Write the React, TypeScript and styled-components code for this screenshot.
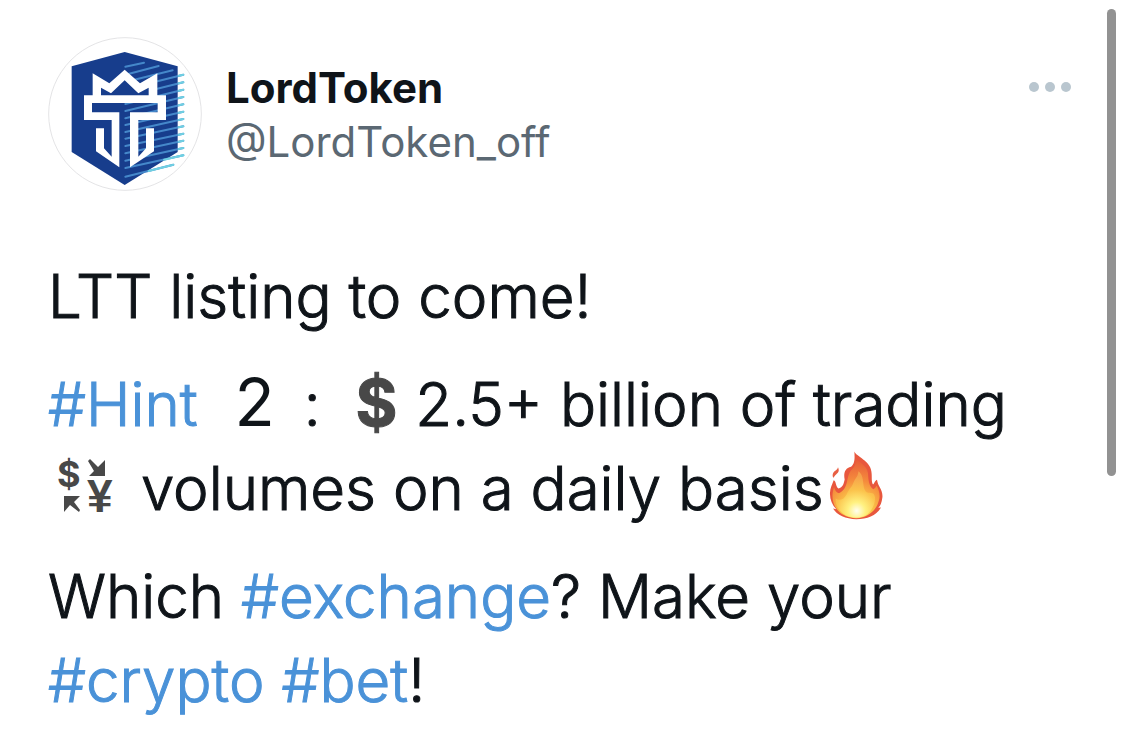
import React from "react";
import styled, { createGlobalStyle } from "styled-components";

const GlobalStyle = createGlobalStyle`
  *, *::before, *::after { box-sizing: border-box; }
  body {
    margin: 0;
    background: #fff;
    color: #0f1419;
    font-family: Inter, "Liberation Sans", sans-serif;
  }
`;

const Post = styled.article`
  padding: 37px 48px 0;
`;

const Header = styled.header`
  display: flex;
  align-items: flex-start;
  gap: 24px;
`;

const Avatar = styled.svg`
  flex: none;
  width: 154px;
  height: 154px;
`;

const Author = styled.div`
  flex: 1;
  padding-top: 24px;
`;

const Name = styled.h1`
  margin: 0;
  font-size: 42px;
  font-weight: 700;
  line-height: 54px;
`;

const Handle = styled.a`
  display: block;
  color: #5b6873;
  font-size: 42px;
  line-height: 54px;
  text-decoration: none;
`;

const MoreButton = styled.button`
  display: flex;
  margin-top: 40px;
  padding: 0 6px 0 0;
  border: 0;
  background: none;
  cursor: pointer;
`;

const Body = styled.div`
  display: flex;
  flex-direction: column;
  gap: 24px;
  margin-top: 63px;
`;

const Paragraph = styled.p`
  margin: 0;
  font-size: 60px;
  font-weight: 300;
  line-height: 84px;
  -webkit-text-stroke: 1px;
`;

const Tag = styled.a`
  color: #4a92d8;
  text-decoration: none;
`;

const HintNumber = styled.span`
  margin: 0 12px 0 20px;
  font-size: 66px;
  font-weight: 400;
  line-height: 60px;
  -webkit-text-stroke: 0;
`;

const DollarSign = styled.span`
  margin: 0 18px;
  color: #484848;
  font-size: 64px;
  font-weight: 700;
  line-height: 60px;
`;

const InlineIcon = styled.svg<{ $width: number; $height: number; $gap: number; $drop: number }>`
  width: ${(p) => p.$width}px;
  height: ${(p) => p.$height}px;
  margin: 0 ${(p) => p.$gap}px;
  vertical-align: -${(p) => p.$drop}px;
  -webkit-text-stroke: 0;
`;

const ScrollThumb = styled.div`
  position: absolute;
  top: 9px;
  right: 9px;
  width: 9px;
  height: 467px;
  border-radius: 5px;
  background: #929292;
`;

const stripes = [
  [256, 110, 312, 98],
  [256, 134, 356, 108],
  [256, 156, 398, 121],
  [256, 178, 430, 134],
  [256, 200, 430, 157],
  [256, 222, 430, 179],
  [256, 243, 430, 201],
  [256, 265, 430, 223],
  [256, 285, 430, 245],
  [256, 306, 430, 267],
  [256, 326, 430, 289],
  [256, 348, 430, 311],
  [256, 370, 430, 332],
  [256, 392, 430, 354],
  [256, 414, 430, 376],
  [256, 440, 400, 404],
];

function Logo() {
  return (
    <Avatar viewBox="24 21 462 462" role="img" aria-label="LordToken avatar">
      <circle cx="255" cy="252" r="229" fill="#fff" stroke="#e4e4e6" strokeWidth="3" />
      <path d="M254 66 413 109V366L254 465 95 366V109Z" fill="#173d8c" />
      <g stroke="#4588ca" strokeWidth="6" strokeLinecap="round">
        {stripes.map(([x1, y1, x2, y2]) => (
          <line key={y1} x1={x1} y1={y1} x2={x2} y2={y2} />
        ))}
      </g>
      <g stroke="#6fd0e2" strokeWidth="6" strokeLinecap="round">
        {stripes.slice(3, 15).map(([, , x2, y2]) => (
          <line key={y2} x1="416" y1={y2 + 3} x2={x2} y2={y2} />
        ))}
        <line x1="326" y1="423" x2="400" y2="404" />
        <line x1="372" y1="389" x2="430" y2="376" />
      </g>
      <path d="M158 130 208 160 254 119 300 160 352 130V196H378V270H295V380L318 355V295H342V364L270 412V247H353V219H156V247H238V412L168 364V295H192V355L215 380V270H132V196H158Z" fill="#fff" />
      <path d="M183 196V173L213 190 254 151 295 190 326 173V196Z" fill="#173d8c" />
    </Avatar>
  );
}

function CurrencyExchange() {
  return (
    <InlineIcon $width={58} $height={76} $gap={9} $drop={15} viewBox="0 -9 58 76" role="img" aria-label="Currency exchange">
      <g fill="#484848" fontWeight="700">
        <text x="0" y="29" fontSize="36" fontFamily="Inter">$</text>
        <text x="30" y="54" fontSize="46" fontFamily="Liberation Sans">¥</text>
        <path d="M33 1 41 9 48 2V18H32L37 13 31 3Z" />
        <path d="M7 38H23L17 44 23 52 22 54 13 47 7 54Z" />
      </g>
    </InlineIcon>
  );
}

function Fire() {
  return (
    <InlineIcon $width={54} $height={69} $gap={5} $drop={10} viewBox="55 37 162 206" role="img" aria-label="Fire">
      <defs>
        <radialGradient id="flame" cx="138" cy="214" r="165" gradientUnits="userSpaceOnUse">
          <stop offset="0" stopColor="#fff6a0" />
          <stop offset=".25" stopColor="#fbc94a" />
          <stop offset=".55" stopColor="#f58b3c" />
          <stop offset="1" stopColor="#e4503a" />
        </radialGradient>
        <radialGradient id="core" cx="138" cy="216" r="105" gradientUnits="userSpaceOnUse">
          <stop offset="0" stopColor="#fffef0" />
          <stop offset=".25" stopColor="#fff180" />
          <stop offset=".6" stopColor="#fbc34c" />
          <stop offset="1" stopColor="#f5a04b" />
        </radialGradient>
      </defs>
      <path d="M131 38C138 54 178 66 182 97C185 113 181 126 187 137C192 134 191 127 199 123C202 145 218 153 215 177C213 191 210 201 203 207L211 206C197 230 170 241 137 241C105 240 79 229 67 209L77 211C64 198 57 181 58 162C58 147 65 137 69 124C77 127 74 141 83 149C97 146 99 135 102 122C98 103 103 88 121 84C134 74 132 53 131 38Z" fill="#e8573d" />
      <path d="M134 57C141 69 170 80 172 103C173 123 175 143 188 151C195 148 195 144 198 141C205 155 211 171 203 190C194 218 169 237 137 238C103 237 77 220 68 190C63 173 66 157 70 145C73 154 77 161 85 163C99 157 105 145 109 129C113 105 119 95 127 88C136 79 136 69 134 57Z" fill="url(#flame)" />
      <path d="M143 97C161 108 155 137 162 153C168 168 186 158 190 167C200 182 185 220 164 230C148 238 122 237 106 230C89 221 73 202 75 179C86 188 101 181 108 166C117 146 122 148 129 130C134 118 144 111 143 97Z" fill="url(#core)" />
      <path d="M82 85C87 96 83 101 77 106C70 111 71 115 68 117C63 108 68 99 75 95C79 92 81 89 82 85Z" fill="#e85f43" />
    </InlineIcon>
  );
}

export default function App() {
  return (
    <>
      <GlobalStyle />
      <Post>
        <Header>
          <Logo />
          <Author>
            <Name>LordToken</Name>
            <Handle href="#profile">@LordToken_off</Handle>
          </Author>
          <MoreButton aria-label="More">
            <svg width="42" height="20" viewBox="0 0 42 20" fill="#b9c6cf">
              <circle cx="5" cy="10" r="5" />
              <circle cx="21" cy="10" r="5" />
              <circle cx="37" cy="10" r="5" />
            </svg>
          </MoreButton>
        </Header>
        <Body>
          <Paragraph>LTT listing to come!</Paragraph>
          <Paragraph>
            <Tag href="#hint">#Hint</Tag> <HintNumber>2</HintNumber> : <DollarSign>$</DollarSign>
            2.5+ billion of trading <CurrencyExchange /> volumes on a daily basis<Fire />
          </Paragraph>
          <Paragraph>
            Which <Tag href="#exchange">#exchange</Tag>? Make your <Tag href="#crypto">#crypto</Tag>{" "}
            <Tag href="#bet">#bet</Tag>!
          </Paragraph>
        </Body>
      </Post>
      <ScrollThumb />
    </>
  );
}
